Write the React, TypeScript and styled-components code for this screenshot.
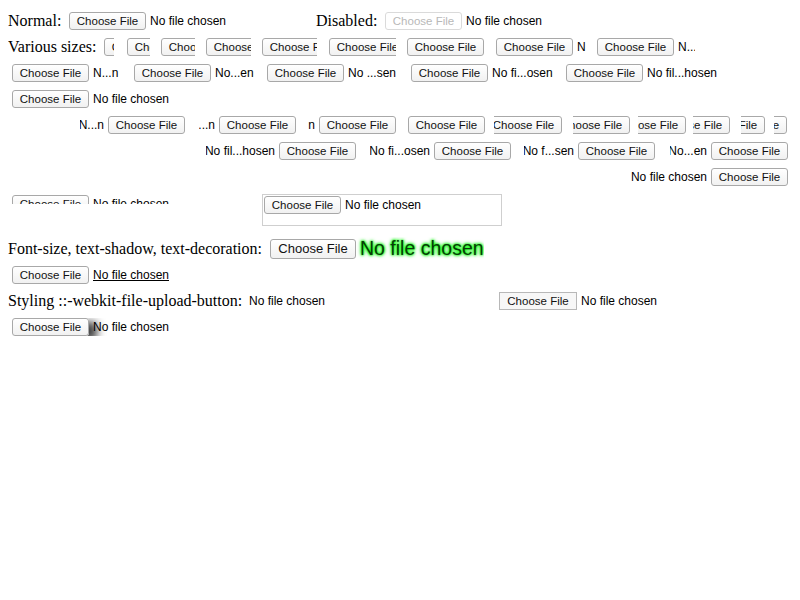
import React from "react";
import styled, { createGlobalStyle, css } from "styled-components";

const Global = createGlobalStyle`
  html, body {
    background: #fff;
  }
  body {
    margin: 8px;
    font-family: "Liberation Serif", "Times New Roman", serif;
    font-size: 16px;
    color: #000;
  }
`;

const Page = styled.div`
  display: flex;
  flex-direction: column;
`;

const Row = styled.div<{ $h?: number; $end?: boolean; $top?: number; $pr?: number }>`
  display: flex;
  align-items: ${(p) => (p.$top !== undefined ? "flex-start" : "center")};
  justify-content: ${(p) => (p.$end ? "flex-end" : "flex-start")};
  height: ${(p) => p.$h ?? 26}px;
  padding-top: ${(p) => p.$top ?? 0}px;
  padding-right: ${(p) => p.$pr ?? 0}px;
  box-sizing: border-box;
  white-space: nowrap;
`;

const Label = styled.span<{ $w: number; $ml?: number }>`
  font-family: "Liberation Serif", "Times New Roman", serif;
  font-size: 16px;
  width: ${(p) => p.$w}px;
  margin-left: ${(p) => p.$ml ?? 0}px;
  flex-shrink: 0;
  overflow: visible;
`;

const Clip = styled.span<{ $h: number; $ml: number; $w: number }>`
  display: block;
  flex-shrink: 0;
  overflow: hidden;
  height: ${(p) => p.$h}px;
  width: ${(p) => p.$w}px;
  margin-left: ${(p) => p.$ml}px;
`;

const Field = styled.span<{ $w?: number; $ml?: number; $rtl?: boolean }>`
  display: inline-flex;
  flex-direction: ${(p) => (p.$rtl ? "row-reverse" : "row")};
  align-items: center;
  gap: 4px;
  flex-shrink: 0;
  overflow: hidden;
  margin-left: ${(p) => p.$ml ?? 0}px;
  ${(p) => p.$w !== undefined && css`width: ${p.$w}px;`}
`;

type ButtonKind = "normal" | "disabled" | "big" | "square" | "shadow";

const PickButton = styled.span<{ $kind: ButtonKind }>`
  display: inline-flex;
  align-items: center;
  justify-content: center;
  flex-shrink: 0;
  box-sizing: border-box;
  width: 77px;
  height: 18px;
  border: 1px solid #a8a8a8;
  border-radius: 3px;
  background: linear-gradient(#ffffff, #f1f1f1);
  font-family: "Liberation Sans", Arial, sans-serif;
  font-size: 11.5px;
  color: #111;

  ${(p) =>
    p.$kind === "disabled" &&
    css`
      border-color: #dadada;
      color: #b8b8b8;
      background: #fff;
    `}
  ${(p) =>
    p.$kind === "big" &&
    css`
      width: 86px;
      height: 20px;
      font-size: 13px;
    `}
  ${(p) =>
    p.$kind === "square" &&
    css`
      width: 78px;
      border-radius: 0;
      border-color: #b8b8b8;
      background: #f7f7f7;
    `}
  ${(p) =>
    p.$kind === "shadow" &&
    css`
      box-shadow: 8px 4px 8px rgba(0, 0, 0, 0.75);
    `}
`;

type NameKind = "normal" | "glow" | "underline";

const FileName = styled.span<{ $kind: NameKind }>`
  font-family: "Liberation Sans", Arial, sans-serif;
  font-size: 12px;
  color: #000;
  white-space: nowrap;
  position: relative;

  ${(p) =>
    p.$kind === "glow" &&
    css`
      font-size: 19.5px;
      color: #0a3a0a;
      text-shadow: 0 0 2px #00ff00, 0 0 3px #00ff00, 0 0 4px #00e000;
    `}
  ${(p) =>
    p.$kind === "underline" &&
    css`
      text-decoration: underline;
    `}
`;

const Frame = styled.div<{ $ml: number }>`
  box-sizing: border-box;
  width: 240px;
  height: 32px;
  margin-left: ${(p) => p.$ml}px;
  padding: 1px;
  border: 1px solid #cfcfcf;
  display: flex;
  align-items: flex-start;
`;

type FileInputProps = {
  name?: string;
  w?: number;
  ml?: number;
  rtl?: boolean;
  button?: ButtonKind | "none";
  nameKind?: NameKind;
};

function FileInput({ name = "No file chosen", w, ml, rtl, button = "normal", nameKind = "normal" }: FileInputProps) {
  return (
    <Field $w={w} $ml={ml} $rtl={rtl}>
      {button !== "none" && <PickButton $kind={button}>Choose File</PickButton>}
      {name && <FileName $kind={nameKind}>{name}</FileName>}
    </Field>
  );
}

const sizes: { w: number; ml: number; name?: string }[] = [
  { w: 10, ml: 0, name: "" },
  { w: 23, ml: 13, name: "" },
  { w: 34, ml: 11, name: "" },
  { w: 45, ml: 11, name: "" },
  { w: 55, ml: 11, name: "" },
  { w: 67, ml: 12, name: "" },
  { w: 77, ml: 11, name: "" },
  { w: 90, ml: 12, name: "N" },
  { w: 98, ml: 11, name: "N..." },
];

const wider = [
  { w: 118, name: "N...n" },
  { w: 129, name: "No...en" },
  { w: 140, name: "No ...sen" },
  { w: 151, name: "No fi...osen" },
  { w: 162, name: "No fil...hosen" },
];

const rtlNarrow = [
  { w: 105, ml: 0, name: "N...n" },
  { w: 97, ml: 14, name: "...n" },
  { w: 89, ml: 11, name: "n" },
  { w: 77, ml: 12, name: "" },
  { w: 68, ml: 9, name: "" },
  { w: 57, ml: 11, name: "" },
  { w: 48, ml: 8, name: "" },
  { w: 37, ml: 7, name: "" },
  { w: 24, ml: 11, name: "" },
  { w: 13, ml: 9, name: "" },
];

const rtlWide = [
  { w: 150, ml: 0, name: "No fil...hosen" },
  { w: 141, ml: 14, name: "No fi...osen" },
  { w: 131, ml: 13, name: "No f...sen" },
  { w: 118, ml: 15, name: "No...en" },
];

export default function App() {
  return (
    <>
      <Global />
      <Page>
        <Row>
          <Label $w={61}>Normal:</Label>
          <FileInput w={238} />
          <Label $w={69} $ml={9}>Disabled:</Label>
          <FileInput button="disabled" />
        </Row>

        <Row>
          <Label $w={96}>Various sizes:</Label>
          {sizes.map((s, i) => (
            <FileInput key={i} w={s.w} ml={s.ml} name={s.name} />
          ))}
        </Row>

        <Row>
          {wider.map((s, i) => (
            <FileInput key={i} w={s.w} ml={4} name={s.name} />
          ))}
        </Row>

        <Row>
          <FileInput ml={4} />
        </Row>

        <Row $end $pr={5}>
          {rtlNarrow.map((s, i) => (
            <FileInput key={i} rtl w={s.w} ml={s.ml} name={s.name} />
          ))}
        </Row>

        <Row $end $pr={4}>
          {rtlWide.map((s, i) => (
            <FileInput key={i} rtl w={s.w} ml={s.ml} name={s.name} />
          ))}
        </Row>

        <Row $end $pr={4}>
          <FileInput rtl />
        </Row>

        <Row $h={45} $top={4}>
          <Clip $h={10} $w={160} $ml={4}>
            <FileInput />
          </Clip>
          <Frame $ml={90}>
            <FileInput />
          </Frame>
        </Row>

        <Row $h={27}>
          <Label $w={262}>Font-size, text-shadow, text-decoration:</Label>
          <FileInput button="big" nameKind="glow" />
        </Row>

        <Row>
          <FileInput ml={4} nameKind="underline" />
        </Row>

        <Row>
          <Label $w={241}>Styling ::-webkit-file-upload-button:</Label>
          <FileInput button="none" w={250} />
          <FileInput button="square" />
        </Row>

        <Row>
          <FileInput ml={4} button="shadow" />
        </Row>
      </Page>
    </>
  );
}
